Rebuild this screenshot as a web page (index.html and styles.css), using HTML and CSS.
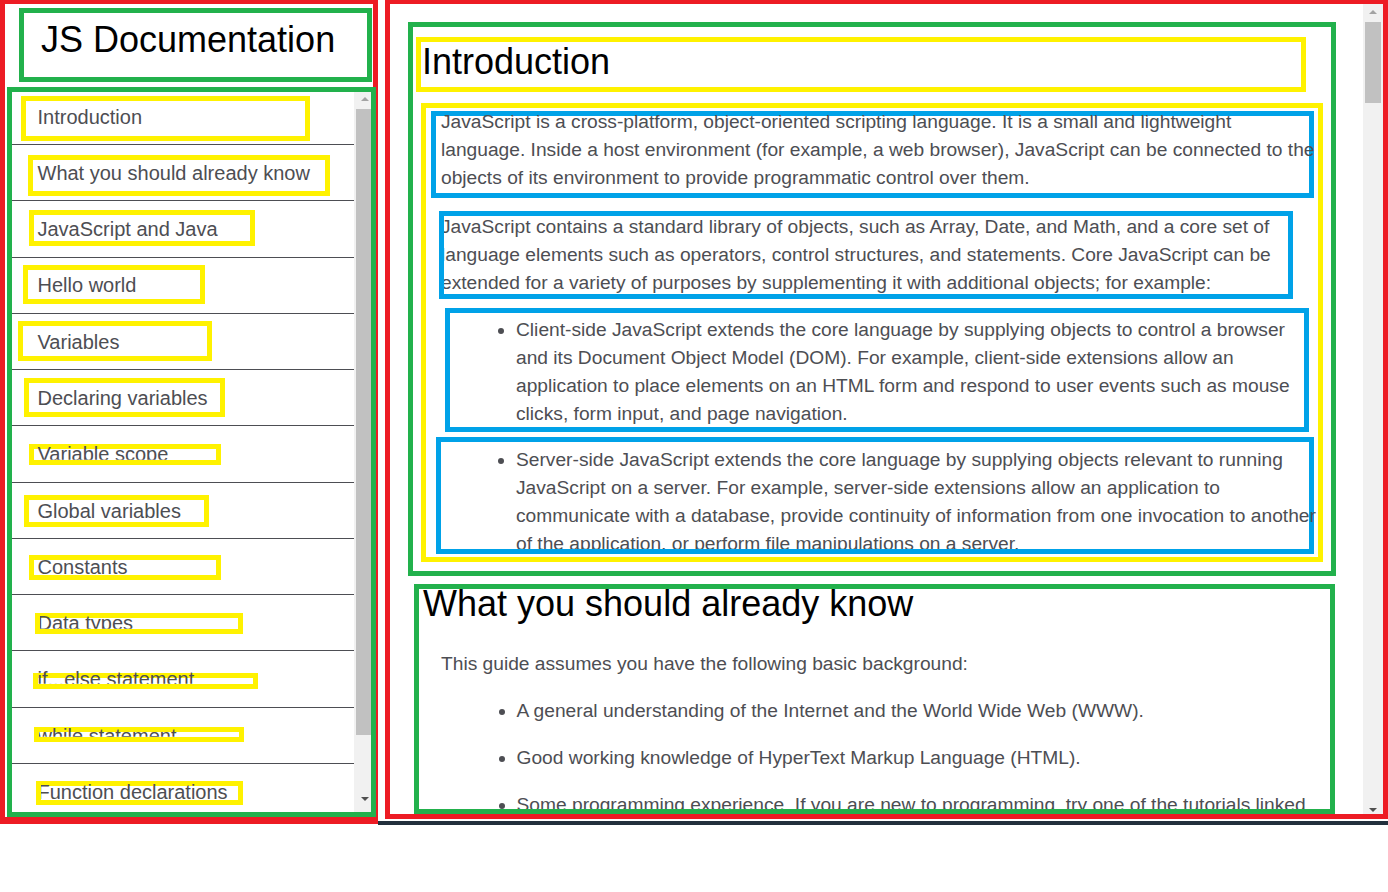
FILE: index.html
```html
<!DOCTYPE html>
<html lang="en">
<head>
<meta charset="utf-8">
<title>JS Documentation</title>
<link rel="stylesheet" href="styles.css">
</head>
<body>
<div class="page">
  <nav class="sidebar" id="navbar">
    <header class="brand"><h1>JS Documentation</h1></header>
    <div class="menu">
      <div class="menu-list">
        <ul>
          <li class="nav-item n1"><a class="nav-link" href="#Introduction"><span class="clip"><span class="nav-label">Introduction</span></span></a></li>
          <li class="nav-item n2"><a class="nav-link" href="#What_you_should_already_know"><span class="clip"><span class="nav-label">What you should already know</span></span></a></li>
          <li class="nav-item n3"><a class="nav-link" href="#JavaScript_and_Java"><span class="clip"><span class="nav-label">JavaScript and Java</span></span></a></li>
          <li class="nav-item n4"><a class="nav-link" href="#Hello_world"><span class="clip"><span class="nav-label">Hello world</span></span></a></li>
          <li class="nav-item n5"><a class="nav-link" href="#Variables"><span class="clip"><span class="nav-label">Variables</span></span></a></li>
          <li class="nav-item n6"><a class="nav-link" href="#Declaring_variables"><span class="clip"><span class="nav-label">Declaring variables</span></span></a></li>
          <li class="nav-item n7"><a class="nav-link" href="#Variable_scope"><span class="clip"><span class="nav-label">Variable scope</span></span></a></li>
          <li class="nav-item n8"><a class="nav-link" href="#Global_variables"><span class="clip"><span class="nav-label">Global variables</span></span></a></li>
          <li class="nav-item n9"><a class="nav-link" href="#Constants"><span class="clip"><span class="nav-label">Constants</span></span></a></li>
          <li class="nav-item n10"><a class="nav-link" href="#Data_types"><span class="clip"><span class="nav-label">Data types</span></span></a></li>
          <li class="nav-item n11"><a class="nav-link" href="#if...else_statement"><span class="clip"><span class="nav-label">if...else statement</span></span></a></li>
          <li class="nav-item n12"><a class="nav-link" href="#while_statement"><span class="clip"><span class="nav-label">while statement</span></span></a></li>
          <li class="nav-item n13"><a class="nav-link" href="#Function_declarations"><span class="clip"><span class="nav-label">Function declarations</span></span></a></li>
        </ul>
      </div>
      <div class="sb nav-sb">
        <span class="sb-btn top"><i class="arrow up"></i></span>
        <span class="sb-thumb"></span>
        <span class="sb-track"></span>
        <span class="sb-btn bottom"><i class="arrow down"></i></span>
      </div>
    </div>
  </nav>

  <main class="content-frame" id="main-doc">
    <div class="content">
      <section class="main-section intro" id="Introduction">
        <header class="sec-head"><h2>Introduction</h2></header>
        <article class="sec-body">
          <div class="blue b1"><div class="clip">
            <p class="text">JavaScript is a cross-platform, object-oriented scripting language. It is a small and lightweight<br>language. Inside a host environment (for example, a web browser), JavaScript can be connected to the<br>objects of its environment to provide programmatic control over them.</p>
          </div></div>
          <div class="blue b2"><div class="clip">
            <p class="text">JavaScript contains a standard library of objects, such as Array, Date, and Math, and a core set of<br>language elements such as operators, control structures, and statements. Core JavaScript can be<br>extended for a variety of purposes by supplementing it with additional objects; for example:</p>
          </div></div>
          <div class="blue b3"><div class="clip">
            <ul class="text list"><li>Client-side JavaScript extends the core language by supplying objects to control a browser<br>and its Document Object Model (DOM). For example, client-side extensions allow an<br>application to place elements on an HTML form and respond to user events such as mouse<br>clicks, form input, and page navigation.</li></ul>
          </div></div>
          <div class="blue b4"><div class="clip">
            <ul class="text list"><li>Server-side JavaScript extends the core language by supplying objects relevant to running<br>JavaScript on a server. For example, server-side extensions allow an application to<br>communicate with a database, provide continuity of information from one invocation to another<br>of the application, or perform file manipulations on a server.</li></ul>
          </div></div>
        </article>
      </section>

      <section class="main-section know" id="What_you_should_already_know">
        <h2>What you should already know</h2>
        <p class="text">This guide assumes you have the following basic background:</p>
        <ul class="text">
          <li>A general understanding of the Internet and the World Wide Web (WWW).</li>
          <li>Good working knowledge of HyperText Markup Language (HTML).</li>
          <li>Some programming experience. If you are new to programming, try one of the tutorials linked<br>on the main page about JavaScript.</li>
        </ul>
      </section>
    </div>
    <div class="sb main-sb">
      <span class="sb-btn top"><i class="arrow up"></i></span>
      <span class="sb-thumb"></span>
      <span class="sb-track"></span>
      <span class="sb-btn bottom"><i class="arrow down"></i></span>
    </div>
  </main>
</div>
</body>
</html>
```
FILE: styles.css
```css
* {
  box-sizing: border-box;
}

body {
  margin: 0;
  background: #fff;
  font-family: "Liberation Sans", Arial, sans-serif;
  color: #4d4e53;
}

.page {
  display: flex;
  align-items: flex-start;
  margin-top: -1px;
  height: 826px;
  background: linear-gradient(#22303d, #22303d) no-repeat 378px 822px / 1010px 4px;
}

/* ---------- sidebar ---------- */
.sidebar {
  flex: none;
  width: 378px;
  height: 825px;
  border: 5px solid #ed1c24;
  border-bottom-width: 7px;
}

.brand {
  margin: 4px 0 0 14px;
  width: 353px;
  height: 74px;
  border: 5px solid #22b14c;
}

.brand h1 {
  margin: 0;
  padding: 7px 0 0 17px;
  font-size: 36px;
  line-height: 40px;
  font-weight: normal;
  color: #000;
}

.menu {
  display: flex;
  margin: 5px 0 0 2px;
  width: 369px;
  height: 730px;
  border: 5px solid #22b14c;
}

.menu-list {
  width: 342px;
  overflow: hidden;
}

.menu-list ul {
  list-style: none;
  margin: -3.3px 0 0;
  padding: 0;
}

.nav-item {
  display: flow-root;
  height: 56.27px;
  border-bottom: 1px solid #4d4e53;
}

.n1  { --x: 21px; --t: 7.3px;  --w: 289px; --h: 45px; }
.n2  { --x: 28px; --t: 10px;   --w: 302px; --h: 41px; }
.n3  { --x: 29px; --t: 8.7px;  --w: 226px; --h: 36px; }
.n4  { --x: 23px; --t: 7.2px;  --w: 182px; --h: 39px; }
.n5  { --x: 18px; --t: 6.9px;  --w: 194px; --h: 40px; }
.n6  { --x: 24px; --t: 7.6px;  --w: 201px; --h: 39px; }
.n7  { --x: 29px; --t: 17.4px; --w: 192px; --h: 21px; }
.n8  { --x: 24px; --t: 12.1px; --w: 185px; --h: 32px; }
.n9  { --x: 29px; --t: 15.8px; --w: 192px; --h: 25px; }
.n10 { --x: 35px; --t: 17.6px; --w: 208px; --h: 21px; }
.n11 { --x: 33px; --t: 21.3px; --w: 225px; --h: 16px; }
.n12 { --x: 34px; --t: 19px;   --w: 210px; --h: 15px; }
.n13 { --x: 36px; --t: 16.8px; --w: 207px; --h: 24px; }

.nav-link {
  display: block;
  margin-left: calc(var(--x) - 12px);
  margin-top: var(--t);
  width: var(--w);
  height: var(--h);
  border: 5px solid #fff200;
  color: #4d4e53;
  text-decoration: none;
}

.clip {
  display: flow-root;
  height: 100%;
  clip-path: inset(-20px -300px 0 0);
}

.nav-label {
  display: block;
  white-space: nowrap;
  font-size: 20px;
  line-height: 24px;
  margin-left: calc(32.5px - var(--x));
  margin-top: calc(11px - var(--t));
}

/* ---------- fake scrollbars ---------- */
.sb {
  flex: none;
  display: flex;
  flex-direction: column;
  background: #f1f1f1;
}

.sb-btn {
  display: block;
}

.sb-thumb {
  display: block;
  background: #c1c1c1;
}

.sb-track {
  flex: 1;
}

.arrow {
  display: block;
  width: 0;
  height: 0;
  border-left: 4px solid transparent;
  border-right: 4px solid transparent;
}

.arrow.up {
  border-bottom: 4px solid #a3a3a3;
}

.arrow.down {
  border-top: 4px solid #505050;
}

.nav-sb {
  width: 17px;
}

.nav-sb .top,
.nav-sb .bottom {
  height: 17px;
}

.nav-sb .sb-thumb {
  height: 626px;
  margin-left: 2px;
}

.nav-sb .arrow {
  margin-left: 7px;
}

.nav-sb .up {
  margin-top: 5px;
}

.nav-sb .down {
  margin-top: 2px;
}

.main-sb {
  width: 20px;
}

.main-sb .top {
  height: 18px;
}

.main-sb .bottom {
  height: 17px;
}

.main-sb .sb-thumb {
  height: 81px;
  margin: 0 2px;
}

.main-sb .arrow {
  margin-left: 6px;
}

.main-sb .up {
  margin-top: 6px;
}

.main-sb .down {
  margin-top: 11px;
}

/* ---------- main ---------- */
.content-frame {
  flex: none;
  display: flex;
  margin-left: 7px;
  width: 1003px;
  height: 820px;
  border: 5px solid #ed1c24;
}

.content {
  flex: 1;
  overflow: hidden;
}

.text {
  margin: 0;
  font-size: 19.2px;
  line-height: 27.84px;
  white-space: nowrap;
}

.intro {
  margin: 18px 0 0 18px;
  width: 928px;
  height: 554px;
  border: 5px solid #22b14c;
}

.sec-head {
  margin: 10px 0 0 3px;
  width: 890px;
  height: 55px;
  border: 5px solid #fff200;
}

.sec-head h2,
.know h2 {
  font-size: 36px;
  line-height: 40px;
  font-weight: normal;
  color: #000;
}

.sec-head h2 {
  margin: 0 0 0 1px;
}

.sec-body {
  margin: 11px 0 0 8px;
  width: 902px;
  height: 459px;
  border: 5px solid #fff200;
}

.blue {
  border: 5px solid #00a2e8;
}

.b1 { margin: 3px 0 0 5px;   width: 883px; height: 87px; }
.b2 { margin: 13px 0 0 13px; width: 854px; height: 88px; }
.b3 { margin: 9px 0 0 19px;  width: 864px; height: 124px; }
.b4 { margin: 5px 0 0 10px;  width: 878px; height: 117px; }

.b1 .text { margin: -8.1px 0 0 5px; }
.b2 .text { margin: -3.1px 0 0 -3px; }
.b3 .list { margin-top: 3.3px; padding-left: 66px; }
.b4 .list { margin-top: 4.3px; padding-left: 75px; }

.know {
  position: relative;
  margin: 8px 0 0 24px;
  width: 921px;
  height: 230px;
  border: 5px solid transparent;
}

.know::after {
  content: "";
  position: absolute;
  inset: -5px;
  border: 5px solid #22b14c;
  pointer-events: none;
}

.know h2 {
  margin: -4.8px 0 0 4px;
}

.know p {
  margin: 25.4px 0 0 22px;
}

.know ul {
  margin: 0;
  padding-left: 97.5px;
}

.know li {
  margin-top: 19.2px;
}
```
